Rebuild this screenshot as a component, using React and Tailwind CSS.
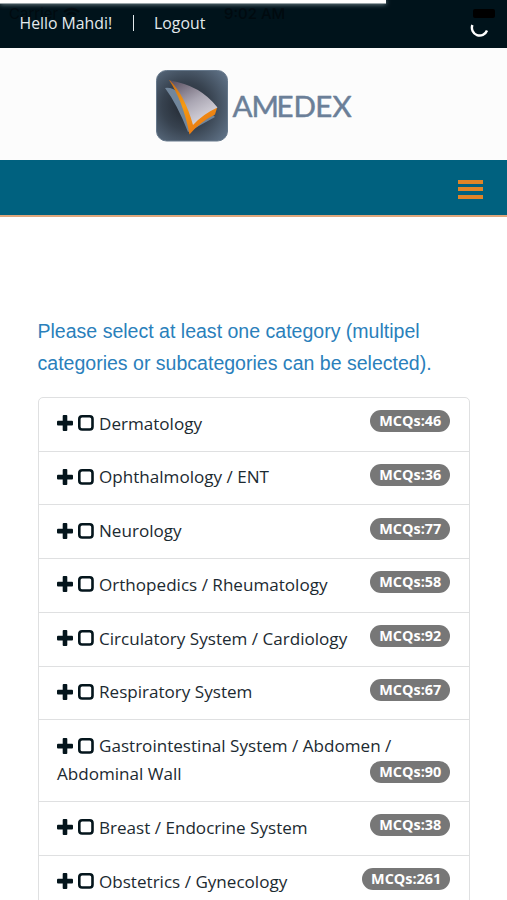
import React from "react";

const categories = [
  { name: "Dermatology", count: 46 },
  { name: "Ophthalmology / ENT", count: 36 },
  { name: "Neurology", count: 77 },
  { name: "Orthopedics / Rheumatology", count: 58 },
  { name: "Circulatory System / Cardiology", count: 92 },
  { name: "Respiratory System", count: 67 },
  { name: "Gastrointestinal System / Abdomen / Abdominal Wall", count: 90 },
  { name: "Breast / Endocrine System", count: 38 },
  { name: "Obstetrics / Gynecology", count: 261 },
];

const PlusIcon = () => (
  <svg
    viewBox="0 0 16 16"
    className="mr-[5px] inline-block h-4 w-4 align-[-1.500px]"
    fill="#04151c"
  >
    <rect x="0" y="5.8" width="16" height="4.6" rx="1" />
    <rect x="5.7" y="0" width="4.6" height="16" rx="1" />
  </svg>
);

const SquareIcon = () => (
  <svg
    viewBox="0 0 16 16"
    className="mr-[5px] inline-block h-4 w-4 align-[-1.500px]"
    fill="none"
  >
    <rect
      x="1.3"
      y="1.3"
      width="13.2"
      height="13.2"
      rx="2.8"
      stroke="#04151c"
      strokeWidth="2.6"
    />
  </svg>
);

const Logo = () => (
  <svg className="overflow-visible" width="202" height="74" viewBox="0 0 202 74">
    <defs>
      <radialGradient id="tile" cx="0.42" cy="0.5" r="0.68">
        <stop offset="0" stopColor="#20262f" />
        <stop offset="0.5" stopColor="#37424f" />
        <stop offset="1" stopColor="#5c6e82" />
      </radialGradient>
      <linearGradient id="page" x1="0.1" y1="0" x2="0.7" y2="1">
        <stop offset="0" stopColor="#5d5364" />
        <stop offset="0.5" stopColor="#a9a5b2" />
        <stop offset="1" stopColor="#dedce3" />
      </linearGradient>
      <linearGradient id="edge" x1="0" y1="0" x2="0.5" y2="1">
        <stop offset="0" stopColor="#c66a16" />
        <stop offset="0.5" stopColor="#f79a10" />
        <stop offset="1" stopColor="#e87b14" />
      </linearGradient>
    </defs>
    <rect x="3.5" y="1.5" width="71" height="70.5" rx="10" fill="url(#tile)" stroke="#66788b" />
    <path d="M12 19Q24 35 35 63L62 48L58 44L26 24Q19 18 12 19Z" fill="#71869b" />
    <path d="M16 11Q30 32 36.500 65.500Q47 53 62 45.500L64 39L30 18Z" fill="url(#edge)" />
    <path d="M17 11.500Q32 27 40 56Q50 45 64.500 38.500Q47 16 17 11.500Z" fill="url(#page)" />
    <text
      x="79.5 98.5 123.5 140.5 162.3 179.5"
      y="47.5"
      fontFamily="Lato, sans-serif"
      fontSize="29.5"
      fill="#6b7f98"
      stroke="#6b7f98"
      strokeWidth="0.5"
      strokeLinejoin="round"
    >
      AMEDEX
    </text>
  </svg>
);

const TopBar = () => (
  <div className="relative h-12 bg-[#00131b] text-[#e3eaed]">
    {/* status bar shows through behind the greeting */}
    <div className="absolute inset-x-0 top-[5px] h-[18px] font-['Inter',sans-serif] text-[15px] leading-[18px] text-[#000a0f]">
      <span className="absolute left-[9px]">Carrier</span>
      <svg className="absolute left-[63px] top-[2px]" width="17" height="13" viewBox="0 0 17 13">
        <path
          d="M1 5Q8.500 -1.500 16 5M4 8Q8.500 4 13 8M7.500 11L9.500 11"
          fill="none"
          stroke="#000a0f"
          strokeWidth="2.200"
        />
      </svg>
      <span className="absolute left-[224px] font-medium">9:02 AM</span>
      <span className="absolute left-[473px] top-[4px] h-[9px] w-[22px] rounded-[2px] bg-black" />
    </div>
    <div className="absolute left-0 top-0 h-[4px] w-[386px] border-b border-[#9aa5a9] bg-white shadow-[0_0_5px_#8fa3ab]" />
    <div className="relative flex h-[47px] items-center pl-[19.500px] text-[15.800px]">
      <span>Hello Mahdi!</span>
      <span className="-mt-[2px] ml-[20.500px] mr-[20.500px] h-4 w-px bg-[#e3eaed]" />
      <span>Logout</span>
    </div>
    <svg className="absolute left-[470px] top-[19px]" width="20" height="20" viewBox="0 0 20 20">
      <path
        d="M2.400 6A7.400 7.400 0 0 0 17 11.500"
        fill="none"
        stroke="#fff"
        strokeWidth="2.400"
      />
    </svg>
  </div>
);

export default function App() {
  return (
    <div className="h-[900px] w-full overflow-hidden bg-white font-['Open_Sans',sans-serif]">
      <TopBar />
      <header className="flex h-28 justify-center bg-[#fcfcfc] pt-[21px]">
        <Logo />
      </header>
      <nav className="flex h-[57px] items-center justify-end border-b-2 border-[#dfa77c] bg-[#00617f] pr-6">
        <button type="button" aria-label="Menu" className="mt-[3px] flex flex-col gap-[3.500px]">
          <span className="h-1 w-[25px] bg-[#e08427]" />
          <span className="h-1 w-[25px] bg-[#e08427]" />
          <span className="h-1 w-[25px] bg-[#e08427]" />
        </button>
      </nav>

      <main className="px-[37.500px] pt-[98px]">
        <p className="font-['Liberation_Sans',sans-serif] text-[19.550px] leading-8 text-[#2a80bb]">
          Please select at least one category (multipel <br />
          categories or subcategories can be selected).
        </p>
        <ul className="mt-[18px] rounded-t-[5px] border border-[#dfe0e1]">
          {categories.map((category) => (
            <li
              key={category.name}
              className="flow-root border-b border-[#dfe0e1] px-[18.500px] pb-[13.100px] pt-[11.650px] text-[17.080px] leading-[28px] text-[#1c2a31]"
            >
              <PlusIcon />
              <SquareIcon />
              {category.name}
              <span className="float-right mt-[0.600px] h-[22px] rounded-full bg-[#777] px-[8.800px] text-[14.400px] font-bold leading-[22px] text-white">
                MCQs:{category.count}
              </span>
            </li>
          ))}
        </ul>
      </main>
    </div>
  );
}
